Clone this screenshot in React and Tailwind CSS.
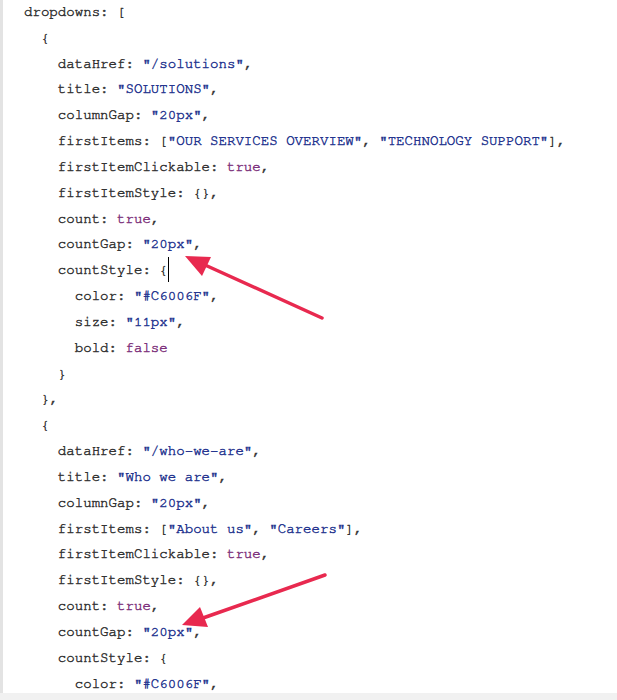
import React from "react";

const lines = [
  [0, [["dropdowns: [", "k"]]],
  [1, [["{", "k"]]],
  [2, [["dataHref: ", "k"], ['"/solutions"', "s"], [",", "k"]]],
  [2, [["title: ", "k"], ['"SOLUTIONS"', "s"], [",", "k"]]],
  [2, [["columnGap: ", "k"], ['"20px"', "s"], [",", "k"]]],
  [2, [["firstItems: [", "k"], ['"OUR SERVICES OVERVIEW"', "s"], [", ", "k"], ['"TECHNOLOGY SUPPORT"', "s"], ["],", "k"]]],
  [2, [["firstItemClickable: ", "k"], ["true", "b"], [",", "k"]]],
  [2, [["firstItemStyle: {},", "k"]]],
  [2, [["count: ", "k"], ["true", "b"], [",", "k"]]],
  [2, [["countGap: ", "k"], ['"20px"', "s"], [",", "k"]]],
  [2, [["countStyle: {", "k"], ["", "c"]]],
  [3, [["color: ", "k"], ['"#C6006F"', "s"], [",", "k"]]],
  [3, [["size: ", "k"], ['"11px"', "s"], [",", "k"]]],
  [3, [["bold: ", "k"], ["false", "b"]]],
  [2, [["}", "k"]]],
  [1, [["},", "k"]]],
  [1, [["{", "k"]]],
  [2, [["dataHref: ", "k"], ['"/who-we-are"', "s"], [",", "k"]]],
  [2, [["title: ", "k"], ['"Who we are"', "s"], [",", "k"]]],
  [2, [["columnGap: ", "k"], ['"20px"', "s"], [",", "k"]]],
  [2, [["firstItems: [", "k"], ['"About us"', "s"], [", ", "k"], ['"Careers"', "s"], ["],", "k"]]],
  [2, [["firstItemClickable: ", "k"], ["true", "b"], [",", "k"]]],
  [2, [["firstItemStyle: {},", "k"]]],
  [2, [["count: ", "k"], ["true", "b"], [",", "k"]]],
  [2, [["countGap: ", "k"], ['"20px"', "s"], [",", "k"]]],
  [2, [["countStyle: {", "k"]]],
  [3, [["color: ", "k"], ['"#C6006F"', "s"], [",", "k"]]],
];

function Seg({ text, type }) {
  if (type === "c") {
    return <span className="inline-block w-px h-[25px] bg-black align-middle -mt-[3px] [-webkit-text-stroke:0]" />;
  }
  if (type === "s") return <span className="text-[#25358f]">{text}</span>;
  if (type === "b") return <span className="text-[#7e337c]">{text}</span>;
  return <span className="text-[#333333]">{text}</span>;
}

export default function App() {
  return (
    <div className="relative w-[617px] h-[700px] bg-white overflow-hidden">
      <div className="flex flex-col h-full">
        <div className="flex-1 border-l-[3px] border-[#e3e3e3] pl-[21px] font-[family-name:Nimbus_Mono_PS,Nimbus_Mono_L,FreeMono,Liberation_Mono,monospace] text-[14.1px] leading-[25.83px] [-webkit-text-stroke:0.45px_currentColor] overflow-hidden">
          {lines.map(([indent, segs], i) => (
            <div key={i} className="whitespace-pre">
              {"  ".repeat(indent)}
              {segs.map(([t, ty], j) => (
                <Seg key={j} text={t} type={ty} />
              ))}
            </div>
          ))}
        </div>
        <div className="h-[7px] bg-[#f1f1f1]" />
      </div>
      <svg
        className="absolute inset-0 pointer-events-none"
        width="617"
        height="700"
        viewBox="0 0 617 700"
      >
        <line x1="322" y1="318" x2="205" y2="265" stroke="#e8294f" strokeWidth="3.5" strokeLinecap="round" />
        <polygon points="185,256 211,257 202,276" fill="#e8294f" />
        <line x1="325" y1="575" x2="203" y2="618" stroke="#e8294f" strokeWidth="3.5" strokeLinecap="round" />
        <polygon points="182,625 208,627 200,607" fill="#e8294f" />
      </svg>
    </div>
  );
}
